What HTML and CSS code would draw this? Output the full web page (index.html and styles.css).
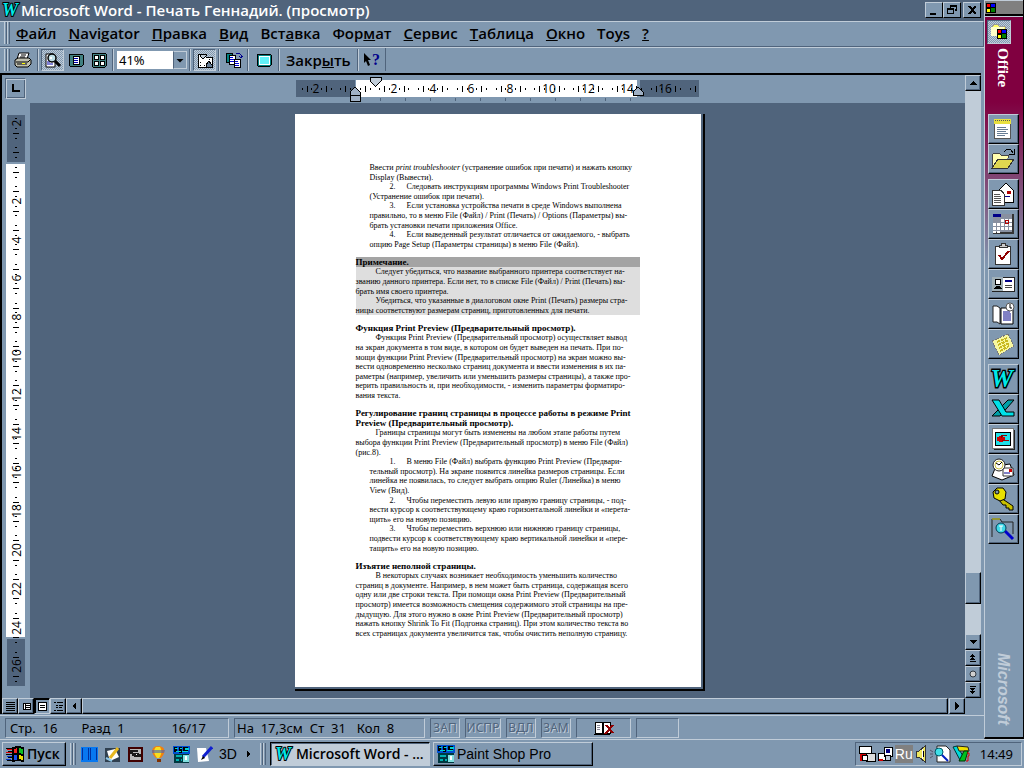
FILE: index.html
```html
<!DOCTYPE html>
<html lang="ru">
<head>
    <meta charset="UTF-8">
    <meta name="viewport" content="width=device-width, initial-scale=1.0">
    <title>Microsoft Word - Печать Геннадий. (просмотр)</title>

    <link rel="stylesheet" href="styles.css">
</head>
<body>
    <svg class="defs" aria-hidden="true">
        <symbol id="word-mark" viewBox="0 0 20 20">
            <text x="1" y="16" font-family="Liberation Serif, serif" font-size="18" font-weight="bold" font-style="italic" fill="#00e8e8" stroke="#000" stroke-width="2" paint-order="stroke">W</text>
        </symbol>
        <symbol id="flag" viewBox="0 0 10 10">
            <path d="M0 0h10v10H0z" fill="#000"/>
            <path d="M1 1h3v3H1z" fill="#f00"/><path d="M5 1h4v3H5z" fill="#00f"/>
            <path d="M1 6h3v3H1z" fill="#ff0"/><path d="M5 5h4v4H5z" fill="#008000"/>
        </symbol>
        <symbol id="psp" viewBox="0 0 18 18">
            <path d="M0 0h18v8H0z" fill="#0050d0"/><path d="M1 1h3v5H1zM6 1h3v6H6zM11 1h5v4h-5z" fill="#000"/>
            <path d="M2 2h3v1H2zM7 2h3v1H7zM13 2h4v2h-4zM3 5h5v1H3zM10 5h6v1h-6z" fill="#00d0d0"/>
            <path d="M1 8h16v10H1z" fill="#003840"/><path d="M3 10h6v2H3zM3 14h3v2H3zM8 14h2v2H8z" fill="#00b0b0"/>
            <path d="M11 10h6v7h-6z" fill="#80e0e0"/><path d="M13 11h2v4h-2z" fill="#fff"/>
        </symbol>
    </svg>

    <div class="desktop">
        <main class="window">
            <header class="title-bar">
                <svg width="20" height="20"><use href="#word-mark"/></svg>
                <h1>Microsoft Word - Печать Геннадий. (просмотр)</h1>
                <button class="win-btn" type="button" aria-label="Свернуть"><svg width="12" height="12"><path d="M2 9h6v2H2z"/></svg></button>
                <button class="win-btn" type="button" aria-label="Восстановить"><svg width="12" height="12"><path d="M4 1h7v6H9V5H8v5H1V4h3zM5 3v1h3v1h2V3zM2 6v3h5V6z" fill-rule="evenodd"/></svg></button>
                <button class="win-btn win-close" type="button" aria-label="Закрыть"><svg width="12" height="12"><path d="M2 2h2l2 2 2-2h2v1L7 6l3 3v1H8L6 8l-2 2H2V9l3-3-3-3z"/></svg></button>
            </header>

            <nav class="menu-bar">
                <span class="grip"></span>
                <a href="#"><u>Ф</u>айл</a>
                <a href="#"><u>N</u>avigator</a>
                <a href="#"><u>П</u>равка</a>
                <a href="#"><u>В</u>ид</a>
                <a href="#">Вст<u>а</u>вка</a>
                <a href="#">Фор<u>м</u>ат</a>
                <a href="#"><u>С</u>ервис</a>
                <a href="#"><u>Т</u>аблица</a>
                <a href="#"><u>О</u>кно</a>
                <a href="#">To<u>y</u>s</a>
                <a href="#"><u>?</u></a>
            </nav>

            <div class="toolbar">
                <span class="grip"></span>
                <button class="tool" type="button" aria-label="Печать">
                    <svg class="smooth" width="18" height="16"><path d="M5 1h10l-2 6H3z" fill="#fff" stroke="#000"/><path d="M7 3h5M6 5h5" stroke="#000"/><path d="M1 8l3-2h11l2 2v4l-3 3H3l-2-2z" fill="#c0c0b0" stroke="#000"/><path d="M2 10h12l2-2M3 12h10" stroke="#000" fill="none"/><path d="M8 11h3v1H8z" fill="#ff0"/></svg>
                </button>
                <span class="sep"></span>
                <button class="tool pressed" type="button" aria-label="Лупа">
                    <svg class="smooth" width="18" height="16"><path d="M2 2h7l2 3v10H2z" fill="#fff" stroke="#000"/><path d="M3 10h3M3 12h6" stroke="#00a"/><circle cx="8" cy="6" r="4" fill="#c0e0e8" stroke="#000" stroke-width="1.5"/><path d="M6 5h2v2H6z" fill="#fff"/><path d="M11 9l5 5" stroke="#000" stroke-width="3"/></svg>
                </button>
                <button class="tool" type="button" aria-label="Одна страница">
                    <svg width="16" height="16"><rect x="1" y="2" width="14" height="12" rx="1" fill="#408080" stroke="#000"/><path d="M5 4h6v8H5z" fill="#fff" stroke="#000"/><path d="M6 6h4M6 8h4M6 10h4" stroke="#00a"/></svg>
                </button>
                <button class="tool" type="button" aria-label="Несколько страниц">
                    <svg width="16" height="16"><rect x="1" y="1" width="14" height="14" rx="1" fill="#408080" stroke="#000"/><path d="M3 3h4v4H3zM9 3h4v4H9zM3 9h4v4H3zM9 9h4v4H9z" fill="#fff" stroke="#000"/></svg>
                </button>
                <span class="sep"></span>
                <label class="zoom-box">
                    <select aria-label="Масштаб"><option>41%</option><option>100%</option></select>
                    <span class="zoom-arrow"></span>
                </label>
                <span class="sep"></span>
                <button class="tool pressed" type="button" aria-label="Линейка">
                    <svg width="18" height="16"><path d="M2 2h5l3 3h6v10H2z" fill="#fff" stroke="#000"/><path d="M4 2h6v2L7 7 4 4z" fill="#c0ccd8" stroke="#000"/><path d="M10 15v-2l3-4 3 4v2z" fill="#667c94" stroke="#000"/><path d="M4 10h1M4 13h1M8 13h1M13 7h1" stroke="#000"/></svg>
                </button>
                <span class="sep"></span>
                <button class="tool" type="button" aria-label="Подгонка страниц">
                    <svg width="18" height="16"><path d="M1 1h6v9H1z" fill="#008080" stroke="#000"/><path d="M4 3h6v9H4z" fill="#fff" stroke="#000"/><path d="M5 5h3M5 7h4M5 9h4" stroke="#00c"/><path d="M9 7h6v8H9z" fill="#fff" stroke="#000"/><path d="M10 9h3M10 11h4M10 13h4" stroke="#00c"/><path d="M11 1h3l2 2v2M14 4l2 2 2-2" stroke="#00008b" fill="none"/></svg>
                </button>
                <span class="sep"></span>
                <button class="tool wide" type="button" aria-label="Во весь экран">
                    <svg width="16" height="14"><rect x="1" y="1" width="14" height="12" rx="1" fill="#008080" stroke="#000"/><path d="M3 3h10v8H3z" fill="#60f0f8" stroke="#fff"/></svg>
                </button>
                <span class="sep"></span>
                <button class="tool-text" type="button">Закр<u>ы</u>ть</button>
                <span class="sep"></span>
                <button class="tool" type="button" aria-label="Справка">
                    <svg class="smooth" width="18" height="20"><path d="M1 3l7 7H5l2 5-2 1-2-5-2 2z"/><text x="9" y="15" font-family="Liberation Serif, serif" font-size="16" font-weight="bold" fill="#00008b">?</text></svg>
                </button>
                <span class="toolbar-end"></span>
            </div>

            <section class="doc-frame">
                <div class="tab-corner"><button class="tab-btn" type="button" aria-label="Табуляция"><svg width="9" height="9"><path d="M1 0h2v6h6v2H1z"/></svg></button></div>

                <div class="ruler-row">
                    <svg id="ruler-h" class="ruler-h" width="403" height="28">
                        <path d="M0 5h59v17H0zM344 5h59v17h-59z" fill="#50647c"/>
                        <path d="M60 5h281v17H60z" fill="#fff"/>
                        <g class="ticks"></g>
                        <path d="M74 2h11v4l-5 5h-1l-5-5z" fill="#c0ccd8" stroke="#000"/>
                        <path d="M54 20v-3l5-5 5 5v3zM54 20h10v6H54z" fill="#a0b0c4" stroke="#000"/>
                        <path d="M337 20v-3l5-5 5 5v3z" fill="#a0b0c4" stroke="#000"/>
                    </svg>
                </div>

                <div class="ruler-col">
                    <svg id="ruler-v" width="20" height="571">
                        <path d="M1 0h18v47H1zM1 524h18v47H1z" fill="#50647c"/>
                        <path d="M0 49h19v473H0z" fill="#fff"/>
                        <g class="ticks"></g>
                    </svg>
                </div>

                <div class="canvas">
                    <div class="page-shadow">
                        <article class="page">
                            <div class="list">
                                <p>Ввести <i>print troubleshooter</i> (устранение ошибок при печати) и нажать кнопку<br>Display (Вывести).</p>
                                <p class="first"><span class="num">2.</span>Следовать инструкциям программы Windows Print Troubleshooter<br>(Устранение ошибок при печати).</p>
                                <p class="first"><span class="num">3.</span>Если установка устройства печати в среде Windows выполнена<br>правильно, то в меню File (Файл) / Print (Печать) / Options (Параметры) вы-<br>брать установки печати приложения Office.</p>
                                <p class="first"><span class="num">4.</span>Если выведенный результат отличается от ожидаемого, - выбрать<br>опцию Page Setup (Параметры страницы) в меню File (Файл).</p>
                            </div>

                            <aside class="note">
                                <h3>Примечание.</h3>
                                <p class="first">Следует убедиться, что название выбранного принтера соответствует на-<br>званию данного принтера. Если нет, то в списке File (Файл) / Print (Печать) вы-<br>брать имя своего принтера.</p>
                                <p class="first">Убедиться, что указанные в диалоговом окне Print (Печать) размеры стра-<br>ницы соответствуют размерам страниц, приготовленных для печати.</p>
                            </aside>

                            <h2>Функция Print Preview (Предварительный просмотр).</h2>
                            <p class="first">Функция Print Preview (Предварительный просмотр) осуществляет вывод<br>на экран документа в том виде, в котором он будет выведен на печать. При по-<br>мощи функции Print Preview (Предварительный просмотр) на экран можно вы-<br>вести одновременно несколько страниц документа и ввести изменения в их па-<br>раметры (например, увеличить или уменьшить размеры страницы), а также про-<br>верить правильность и, при необходимости, - изменить параметры форматиро-<br>вания текста.</p>

                            <h2>Регулирование границ страницы в процессе работы в режиме Print<br>Preview (Предварительный просмотр).</h2>
                            <p class="first">Границы страницы могут быть изменены на любом этапе работы путем<br>выбора функции Print Preview (Предварительный просмотр) в меню File (Файл)<br>(рис.8).</p>
                            <div class="list">
                                <p class="first"><span class="num">1.</span>В меню File (Файл) выбрать функцию Print Preview (Предвари-<br>тельный просмотр). На экране появится линейка размеров страницы. Если<br>линейка не появилась, то следует выбрать опцию Ruler (Линейка) в меню<br>View (Вид).</p>
                                <p class="first"><span class="num">2.</span>Чтобы переместить левую или правую границу страницы, - под-<br>вести курсор к соответствующему краю горизонтальной линейки и «перета-<br>щить» его на новую позицию.</p>
                                <p class="first"><span class="num">3.</span>Чтобы переместить верхнюю или нижнюю границу страницы,<br>подвести курсор к соответствующему краю вертикальной линейки и «пере-<br>тащить» его на новую позицию.</p>
                            </div>

                            <h2>Изъятие неполной страницы.</h2>
                            <p class="first">В некоторых случаях возникает необходимость уменьшить количество<br>страниц в документе. Например, в нем может быть страница, содержащая всего<br>одну или две строки текста. При помощи окна Print Preview (Предварительный<br>просмотр) имеется возможность смещения содержимого этой страницы на пре-<br>дыдущую. Для этого нужно в окне Print Preview (Предварительный просмотр)<br>нажать кнопку Shrink To Fit (Подгонка страниц). При этом количество текста во<br>всех страницах документа увеличится так, чтобы очистить неполную страницу.</p>
                        </article>
                    </div>
                </div>

                <div class="scroll-v">
                    <button class="scroll-btn" type="button" aria-label="Вверх"><svg width="8" height="8"><path d="M4 2l4 4H0z"/></svg></button>
                    <div class="track-v">
                        <span class="before"></span>
                        <span class="thumb"></span>
                        <span class="after"></span>
                    </div>
                    <button class="scroll-btn" type="button" aria-label="Вниз"><svg width="8" height="8"><path d="M0 2h8L4 6z"/></svg></button>
                    <button class="scroll-btn" type="button" aria-label="Предыдущая страница"><svg width="8" height="8"><path d="M3 0h1v1h1v1h1v1H4v1h1v1h1v1H1V5h1V4h1V3H1V2h1V1h1zM1 7h6v1H1z"/></svg></button>
                    <button class="scroll-btn" type="button" aria-label="Объект перехода"><svg class="smooth" width="8" height="8"><circle cx="4" cy="4" r="3" fill="#d0d0d0" stroke="#303840"/></svg></button>
                    <button class="scroll-btn" type="button" aria-label="Следующая страница"><svg width="8" height="8"><path d="M1 0h6v1H1zM1 2h5v1H5v1H4v1h2v1H5v1H4v1H3V7H2V6H1V5h2V4H2V3H1z"/></svg></button>
                </div>

                <div class="scroll-h">
                    <button class="scroll-btn" type="button" aria-label="Обычный"><svg width="9" height="9"><path d="M0 0h9v1H0zM0 2h9v1H0zM0 4h9v1H0zM0 6h9v1H0zM0 8h9v1H0z"/></svg></button>
                    <button class="scroll-btn" type="button" aria-label="Электронный документ"><svg width="9" height="9"><path d="M1 1h8v7H1z"/><path d="M2 2h1v5H2zM4 2h4v1H4zM4 4h4v1H4zM4 6h4v1H4z" fill="#fff"/></svg></button>
                    <button class="scroll-btn sunken" type="button" aria-label="Разметка"><svg width="9" height="9"><path d="M0 0h9v9H0z"/><path d="M1 1h7v7H1z" fill="#fff"/><path d="M2 3h5v1H2zM2 5h5v1H2z"/></svg></button>
                    <button class="scroll-btn" type="button" aria-label="Структура"><svg width="9" height="9"><path d="M0 0h2v1H0zM3 0h6v1H3zM2 3h2v1H2zM5 3h4v1H5zM2 5h2v1H2zM5 5h3v1H5zM0 8h2v1H0zM3 8h6v1H3z"/></svg></button>
                    <button class="scroll-btn" type="button" aria-label="Влево"><svg width="8" height="8"><path d="M6 0v8L2 4z"/></svg></button>
                    <span class="thumb"></span>
                    <button class="scroll-btn" type="button" aria-label="Вправо"><svg width="8" height="8"><path d="M2 0v8l4-4z"/></svg></button>
                </div>
            </section>

            <footer class="status-bar">
                <div class="field place"><span>Стр.&nbsp; 16</span><span>Разд&nbsp; 1</span><span class="pages">16/17</span></div>
                <div class="field pos"><span>На&nbsp; 17,3см</span><span>Ст&nbsp; 31</span><span>Кол&nbsp; 8</span></div>
                <div class="field off">ЗАП</div>
                <div class="field off rev">ИСПР</div>
                <div class="field off">ВДЛ</div>
                <div class="field off">ЗАМ</div>
                <div class="field book">
                    <svg width="20" height="15"><path d="M1 3l1-2h5l2 1 2-1h5v11H1z" fill="#fff" stroke="#000"/><path d="M0 13h16v1H0zM8 2h2v11H8z"/><path d="M3 4h3M3 6h3M3 8h3" stroke="#889"/><path d="M12 4l7 8M19 4l-8 9" stroke="#900000" stroke-width="2"/></svg>
                </div>
                <div class="field blank"></div>
            </footer>
        </main>

        <aside class="office-bar">
            <div class="office-cap"><svg width="10" height="10"><use href="#flag"/></svg></div>
            <div class="office-body">
                <button class="office-main" type="button" aria-label="Office"><svg width="18" height="18"><path d="M2 4l2-3h4l1 2h6v9H2z" fill="#ff6" stroke="#999"/><path d="M1 4h13v9H1z" fill="#ffffc8"/><svg x="7" y="6" width="10" height="10"><use href="#flag"/></svg></svg></button>
                <span class="office-name">Office</span>

                <div class="office-group">
                    <button class="shortcut" type="button" aria-label="Создать документ"><svg width="24" height="24"><path d="M5 5h15v17H5z" fill="#000"/><path d="M3 3h16v18H3z" fill="#fff" stroke="#555"/><path d="M3 2h17v5H3z" fill="#e8e040"/><path d="M4 3h15" stroke="#555" stroke-dasharray="1 1"/><path d="M6 10h9M6 12h11M6 14h9M6 16h11M6 18h8" stroke="#667c94"/></svg></button>
                    <button class="shortcut" type="button" aria-label="Открыть документ"><svg width="24" height="24"><path d="M1 21V8l2-2h5l2 2h7v3" fill="#ffffb0" stroke="#444"/><path d="M1 21l6-9h16l-6 9z" fill="#e0d850" stroke="#333"/><path d="M13 5c3-4 7-4 9 1M23 2v5h-5" fill="none" stroke="#000"/></svg></button>
                </div>
                <div class="office-group">
                    <button class="shortcut" type="button" aria-label="Сообщение"><svg width="24" height="24"><path d="M7 9l8-8 7 7v12H7z" fill="#fff" stroke="#000"/><path d="M16 9h4v3h-4z" fill="#b00000"/><path d="M11 14h8" stroke="#008"/><path d="M1 8h9l3 4v11H1z" fill="#fff" stroke="#333"/><path d="M3 12h6M3 14h7M3 16h7M3 18h7M3 20h7" stroke="#555"/></svg></button>
                    <button class="shortcut" type="button" aria-label="Встреча"><svg width="24" height="24"><path d="M2 2h21v20H2z" fill="#333"/><path d="M2 2h19v18H2z" fill="#8890a0"/><path d="M2 2h8v3H2z" fill="#008"/><path d="M10 7h3v3h-3zM14 7h3v3h-3zM18 7h3v3h-3zM2 11h3v3H2zM6 11h3v3H6zM10 11h3v3h-3zM14 11h3v3h-3zM18 11h3v3h-3zM2 15h3v3H2zM6 15h3v3H6zM10 15h3v3h-3zM14 15h3v3h-3zM18 15h3v3h-3zM2 19h3v2H2zM6 19h3v2H6z" fill="#fff"/><circle cx="16" cy="10" r="2" fill="none" stroke="#b00000"/></svg></button>
                    <button class="shortcut" type="button" aria-label="Задача"><svg width="24" height="24"><path d="M5 5h15v18H5z" fill="#000"/><path d="M4 4h15v18H4z" fill="#fff" stroke="#333"/><path d="M8 5V3h2V1h4v2h2v2z" fill="#ccc" stroke="#333"/><path d="M8 13l3 4 7-8" fill="none" stroke="#900000" stroke-width="2"/></svg></button>
                    <button class="shortcut" type="button" aria-label="Контакт"><svg width="24" height="24"><path d="M1 5h22v14H1z" fill="#fff" stroke="#222"/><path d="M1 5h11v14H1z" fill="#a0b0b8"/><circle cx="7" cy="10" r="3" fill="#fff" stroke="#000"/><path d="M3 17c0-4 8-4 8 0z" fill="#000"/><path d="M14 9h7" stroke="#008" stroke-width="2"/><path d="M14 13h7M14 15h7" stroke="#444"/></svg></button>
                    <button class="shortcut" type="button" aria-label="Дневник"><svg class="smooth" width="24" height="24"><path d="M2 4h4l3 2v16l-3-2H2z" fill="#fff" stroke="#222"/><path d="M10 6h12v16H10z" fill="#fff" stroke="#000"/><path d="M12 10h7M12 12h8M12 14h8M12 16h8M12 18h8" stroke="#008"/><circle cx="19" cy="5" r="4" fill="#fff" stroke="#555"/><path d="M19 2v4h2" fill="none" stroke="#000"/></svg></button>
                    <button class="shortcut" type="button" aria-label="Заметка"><svg width="24" height="24"><path d="M1 9l16-7 6 12-15 9z" fill="#f8f8a0" stroke="#777" stroke-dasharray="2 1"/><path d="M6 10l10-4M7 13l11-5M8 16l11-5M9 19l9-5" stroke="#c8b820" stroke-width="2" stroke-dasharray="3 1"/></svg></button>
                </div>
                <div class="office-group">
                    <button class="shortcut" type="button" aria-label="Word"><svg width="28" height="28"><use href="#word-mark"/></svg></button>
                    <button class="shortcut" type="button" aria-label="Excel"><svg class="smooth" width="24" height="22"><path d="M17 2h6L9 18H1z" fill="#00a0a8" stroke="#000"/><path d="M1 2h7l7 12h8v4H11z" fill="#00e0e8" stroke="#000"/></svg></button>
                    <button class="shortcut" type="button" aria-label="PowerPoint"><svg width="24" height="24"><path d="M3 3h21v20H3z" fill="#222"/><path d="M1 1h21v20H1z" fill="#fff" stroke="#777"/><path d="M4 5h15v13H4z" fill="#20e0e8" stroke="#000"/><ellipse cx="10" cy="12" rx="4" ry="3" fill="#d00000"/><path d="M10 12V8h6v1h-4z" fill="#900000"/><path d="M11 13h7" stroke="#900"/></svg></button>
                    <button class="shortcut" type="button" aria-label="Outlook"><svg class="smooth" width="24" height="24"><path d="M5 9l14-2 4 11-12 5-10-4z" fill="#fff" stroke="#000"/><path d="M12 11h10v8H12z" fill="#fff" stroke="#333"/><path d="M18 12h3v3h-3z" fill="#c00"/><path d="M13 16h6" stroke="#008"/><circle cx="8" cy="8" r="6" fill="#fff" stroke="#222"/><circle cx="8" cy="8" r="4" fill="none" stroke="#c8c040"/><path d="M8 8l3-3M8 8L5 6" stroke="#000"/></svg></button>
                    <button class="shortcut" type="button" aria-label="Access"><svg class="smooth" width="24" height="24"><path d="M10 11l12 8v4h-4v-2h-3v-3h-3l-4-5z" fill="#c8c000" stroke="#000"/><path d="M2 5l4-4h6l3 4-1 7-5 2-6-3z" fill="#e8e000" stroke="#000"/><circle cx="6" cy="5" r="2" fill="#8098b0" stroke="#000"/></svg></button>
                    <button class="shortcut" type="button" aria-label="Поиск"><svg class="smooth" width="24" height="24"><path d="M1 20V2h8l2 3h11v12" fill="none" stroke="#222"/><path d="M1 2h8" stroke="#d8d000"/><path d="M14 14l8 8" stroke="#00c" stroke-width="3"/><circle cx="10" cy="11" r="5" fill="#40d8e8" stroke="#003850"/><path d="M8 9h4M10 9v5" stroke="#fff"/></svg></button>
                </div>
                <span class="office-brand">Microsoft</span>
            </div>
        </aside>
    </div>

    <footer class="taskbar">
        <button class="start" type="button"><svg width="19" height="18"><path d="M0 3h6v1H0zM2 6h4v1H2zM0 9h6v1H0zM2 12h4v1H2zM1 15h5v1H1z" fill="#000"/><path d="M1 4h5v1H1zM0 7h6v1H0z" fill="#d00"/><path d="M1 11h5v1H1zM0 14h5v1H0z" fill="#03c"/><path d="M6 2l5-1 7 1v15l-6-1-6 1z" fill="#000"/><path d="M8 4l3-1v5H8z" fill="#f02020"/><path d="M13 3l4 1v5l-4-1z" fill="#10c020"/><path d="M8 10h3v5H8z" fill="#1850f0"/><path d="M13 10l4 1v4l-4-1z" fill="#f0e000"/></svg>Пуск</button>
        <span class="divider"></span>
        <nav class="quick">
            <button type="button" aria-label="Commander"><svg width="17" height="17"><path d="M0 1h17v15H0z" fill="#0878f0"/><path d="M1 2v12M7 2v12M9 2v12M15 2v12" stroke="#0030a0"/></svg></button>
            <button type="button" aria-label="Свернуть все"><svg class="smooth" width="17" height="17"><path d="M1 2h15v14H1z" fill="#304050"/><path d="M3 5l8-2 4 8-9 4z" fill="#fff"/><path d="M6 12L14 2" stroke="#e8b820" stroke-width="3"/><path d="M2 12l6 3" stroke="#90c8e8" stroke-width="2"/></svg></button>
            <button type="button" aria-label="Просмотр"><svg width="17" height="17"><path d="M1 1h15v15H1z" fill="#400000"/><path d="M3 3h11v11H3z" fill="#b8b8b8"/><path d="M3 4h8v2H6v2H3zM5 7h7v1h2v3H7v-1H5z" fill="#181818"/><path d="M9 8h1v1H9z" fill="#fff"/></svg></button>
            <button type="button" aria-label="Шар"><svg class="smooth" width="17" height="17"><path d="M8 0c8 0 8 7 3 12H6C0 7 1 0 8 0z" fill="#f08010"/><path d="M6 1c-3 3-2 7 1 11h2c3-4 3-8 1-11z" fill="#f8e020"/><path d="M2 4h13l-1 3H2z" fill="#4060c0" opacity=".6"/><path d="M7 13h4v3H7z" fill="#803000"/></svg></button>
            <button type="button" aria-label="Paint Shop Pro"><svg width="17" height="17"><use href="#psp"/></svg></button>
            <button type="button" aria-label="Перо"><svg class="smooth" width="17" height="17"><path d="M1 2l9 0 3 13-11 1z" fill="#fff"/><path d="M7 11L16 1" stroke="#1020d0" stroke-width="3"/><path d="M5 14l2-4 2 2z"/></svg></button>
            <button class="text-3d" type="button">3D</button>
            <button class="more" type="button" aria-label="Ещё"><svg width="5" height="7"><path d="M1 0v6l3-3z"/></svg></button>
        </nav>
        <span class="divider"></span>
        <button class="task active" type="button"><svg width="20" height="20"><use href="#word-mark"/></svg>Microsoft Word - ...</button>
        <button class="task" type="button"><svg width="18" height="18"><use href="#psp"/></svg>Paint Shop Pro</button>
        <div class="tray">
            <svg width="36" height="18"><path d="M1 1h12v7H1z" fill="#fff" stroke="#000"/><path d="M2 9h8v7H2z" fill="#d00000"/><path d="M8 8h9v8H8z" fill="#ddd" stroke="#000"/><circle cx="7" cy="13" r="3" fill="#fff" stroke="#000"/><path d="M20 8h8v7h-8z" fill="#fff" stroke="#000"/><path d="M26 2h8v9h-8z" fill="#fff" stroke="#000"/><path d="M28 4h4v4h-4z" fill="#000080"/><circle cx="30" cy="13" r="3" fill="#c0ccd8" stroke="#000"/><path d="M21 14h4v2h-4z" fill="#d00000"/></svg>
            <span class="lang">Ru</span>
            <svg width="15" height="18"><path d="M2 6h3l6-5v16l-6-5H2z" fill="#f0e860" stroke="#333"/><path d="M8 4v10" stroke="#fff"/><path d="M9 6v6" stroke="#000"/></svg>
            <svg class="smooth" width="21" height="18"><path d="M7 1h9l4 4v12H7z" fill="#fff" stroke="#222"/><path d="M0 5l3 2M0 9h3M0 13l3-2" stroke="#556"/><circle cx="9" cy="7" r="4" fill="#40e0e8" stroke="#056"/><path d="M12 10l6 6" stroke="#0020c0" stroke-width="2"/></svg>
            <svg class="smooth" width="18" height="18"><path d="M1 2l4-1 6 10-3 4z" fill="#00d8d8" stroke="#033"/><path d="M5 1l11 1 1 4H7z" fill="#f0e000" stroke="#222"/><path d="M16 6l-3 10H7l5-10z" fill="#00c020" stroke="#030"/><path d="M15 8h2v3h-1v5h-2" stroke="#e00000" fill="none"/></svg>
            <time>14:49</time>
        </div>
    </footer>

    <script>
        const STEP = 19.4; // one centimetre at the 41% zoom

        // half-centimetre ticks, quarter dots, a number on every second mark
        function draw_ruler(id, zero, from, to, vertical)
        {
            let out = "";

            for(let q = from * 4; q <= to * 4; q++)
            {
                const pos = Math.round(zero + q * STEP / 4);

                if(q % 4 === 0)
                {
                    if(q % 8 !== 0 || q === 0) continue;
                    const at = vertical ? `transform="translate(15 ${pos}) rotate(-90)"` : `x="${pos}" y="18"`;
                    out += `<text class="ruler-num" ${at}>${Math.abs(q / 4)}</text>`;
                    continue;
                }

                // wide numbers cover the quarter dots next to them
                const half = q % 2 === 0;
                if(!half && Math.abs(Math.round(q / 8) * 8) >= 80 && Math.abs(q - Math.round(q / 8) * 8) === 1) continue;

                const len = half ? 6 : 2;
                out += vertical
                    ? `<rect x="${10 - len / 2}" y="${pos}" width="${len}" height="1"/>`
                    : `<rect x="${pos}" y="${14 - len / 2}" width="1" height="${len}"/>`;
            }

            // default tab stops under the horizontal ruler
            if(!vertical)
            {
                for(let x = 84; x < 340; x += 25) out += `<rect class="tab-stop" x="${x}" y="23" width="1" height="3"/>`;
            }

            document.querySelector(`#${id} .ticks`).innerHTML = out;
        }

        draw_ruler("ruler-h", 59, -2.75, 17.5, false);
        draw_ruler("ruler-v", 47, -2.25, 26.75, true);
    </script>
</body>
</html>
```

FILE: styles.css
```css
:root{
    --face: #8098b0;
    --dark: #50647c;
    --light: #c0ccd8;
}

*{
    box-sizing: border-box;
}

body{
    margin: 0;
    height: 100vh;
    display: flex;
    flex-direction: column;
    overflow: hidden;
    background-color: var(--face);
    color: black;
    font-family: "Noto Sans", sans-serif;
    font-size: 13px;
}

svg{
    display: block;
    flex: none;
    shape-rendering: crispEdges;
}

.smooth{
    shape-rendering: auto;
}

button, select{
    font: inherit;
    color: inherit;
    border: 0;
    padding: 0;
    background: none;
}

.defs{
    position: absolute;
    width: 0;
    height: 0;
}

.desktop{
    flex: 1;
    min-height: 0;
    display: flex;
}

.window{
    flex: 1;
    min-width: 0;
    display: flex;
    flex-direction: column;
}

/* title */
.title-bar{
    height: 21px;
    padding: 0 3px 1px 1px;
    display: flex;
    align-items: center;
    background-color: var(--dark);
    color: white;
}

.title-bar h1{
    flex: 1;
    margin: 0;
    font: 600 15px/18px "Open Sans", sans-serif;
    white-space: nowrap;
}

.win-btn{
    width: 18px;
    height: 16px;
    padding: 1px 2px;
    background-color: var(--face);
    border: 1px solid;
    border-color: var(--light) black black var(--light);
}

.win-close{
    margin-left: 2px;
}

/* menu and toolbar */
.menu-bar, .toolbar{
    display: flex;
    align-items: center;
    border-top: 1px solid var(--light);
    padding: 0 0 2px 4px;
}

.menu-bar{
    height: 26px;
    gap: 12px;
    border-bottom: 1px solid var(--dark);
    border-right: 1px solid var(--dark);
    font: 600 15px/20px "Open Sans", sans-serif;
}

.menu-bar a{
    color: black;
    text-decoration: none;
}

.grip, .divider{
    width: 6px;
    height: 22px;
    flex: none;
    background: repeating-linear-gradient(to right, var(--light) 0 1px, var(--face) 1px 2px, var(--dark) 2px 3px);
}

.menu-bar .grip{
    margin-right: -6px;
}

.toolbar{
    height: 26px;
}

.tool{
    width: 23px;
    height: 22px;
    display: flex;
    align-items: center;
    justify-content: center;
}

.grip + .tool{
    margin: 0 1px;
}

.wide{
    width: 25px;
}

.pressed, .office-main{
    border: 1px solid;
    border-color: var(--dark) var(--light) var(--light) var(--dark);
    background: repeating-conic-gradient(var(--light) 0 25%, var(--face) 0 50%) 0 0 / 2px 2px;
}

.sep{
    width: 2px;
    height: 22px;
    margin: 0 2px;
    background-color: var(--dark);
    border-right: 1px solid var(--light);
}

.tool-text{
    padding: 0 4px;
    font: 600 15px/20px "Open Sans", sans-serif;
}

.toolbar-end{
    align-self: stretch;
    border-right: 1px solid var(--dark);
    width: 2px;
}

.zoom-box{
    position: relative;
    width: 70px;
    height: 18px;
    margin-left: 1px;
    display: flex;
    background-color: white;
}

.zoom-box select{
    appearance: none;
    width: 100%;
    padding-left: 2px;
    line-height: 18px;
}

.zoom-arrow{
    position: absolute;
    top: 0;
    right: 0;
    width: 14px;
    height: 18px;
    pointer-events: none;
    background-color: var(--face);
    border: 1px solid var(--light);
    border-left-color: var(--dark);
}

.zoom-arrow::after{
    content: "";
    display: block;
    margin: 7px auto 0;
    width: 8px;
    height: 4px;
    background-color: black;
    clip-path: polygon(0 0, 100% 0, 50% 100%);
}

/* document */
.doc-frame{
    flex: 1;
    min-height: 0;
    display: grid;
    grid-template: 28px minmax(0, 1fr) 16px / 28px minmax(0, 1fr) 16px;
    margin-right: 3px;
    border-top: 2px solid black;
    border-left: 2px solid black;
}

.tab-corner{
    padding: 3px;
}

.tab-btn{
    width: 21px;
    height: 21px;
    padding: 5px;
    border: 1px solid;
    border-color: var(--dark) var(--light) var(--light) var(--dark);
    box-shadow: inset 1px 1px var(--light), inset -1px -1px var(--dark);
}

.ruler-row{
    display: flex;
    justify-content: center;
}

.ruler-num{
    font-family: "Open Sans", sans-serif;
    font-size: 12px;
    text-anchor: middle;
}

.tab-stop{
    fill: var(--dark);
}

.ruler-col{
    padding: 12px 4px;
}

.canvas{
    display: flex;
    justify-content: center;
    padding: 11px 0 7px 4px;
    background-color: var(--dark);
    overflow: hidden;
}

.page-shadow{
    padding: 0 2px 2px 0;
    border-right: 2px solid black;
    border-bottom: 2px solid black;
}

.page{
    width: 406px;
    height: 100%;
    padding: 49px 61px 0;
    background-color: white;
    font: 8px/1.2 "Liberation Serif", serif;
    white-space: nowrap;
}

.page p, .page h2, .page h3{
    margin: 0;
}

.page h2{
    margin-top: 8px;
    font-size: 9px;
    line-height: 10px;
}

.page h3{
    font-size: 9px;
    line-height: 10px;
    background-color: #a4a4a4;
}

.first{
    text-indent: 20px;
}

.list{
    margin-left: 14px;
}

.num{
    display: inline-block;
    width: 17px;
    text-indent: 0;
}

.note{
    margin-top: 8px;
    background-color: #dedede;
}

/* scroll bars */
.scroll-v{
    grid-area: 1 / 3 / 3 / 4;
    display: flex;
    flex-direction: column;
}

.scroll-h{
    grid-area: 3 / 1 / 4 / 3;
    display: flex;
}

.scroll-btn, .thumb{
    width: 16px;
    height: 16px;
    flex: none;
    display: flex;
    align-items: center;
    justify-content: center;
    background-color: var(--face);
    border: 1px solid;
    border-color: var(--light) black black var(--light);
    box-shadow: inset -1px -1px var(--dark);
}

.sunken{
    border-color: black var(--light) var(--light) black;
    box-shadow: inset 1px 1px black;
}

.track-v{
    flex: 1;
    display: flex;
    flex-direction: column;
    background-color: var(--light);
}

.track-v .before{
    flex: 480;
}

.track-v .after{
    flex: 30;
}

.track-v .thumb{
    height: 32px;
}

.scroll-h .thumb{
    flex: 1;
    margin-right: 1px;
}

/* status bar */
.status-bar{
    height: 24px;
    margin-top: 1px;
    padding: 2px 5px 1px;
    display: flex;
    gap: 5px;
    border-top: 1px solid var(--light);
}

.field{
    display: flex;
    align-items: center;
    border: 1px solid;
    border-color: var(--dark) var(--light) var(--light) var(--dark);
    line-height: 18px;
    white-space: nowrap;
}

.place{
    width: 224px;
    padding: 0 22px 0 4px;
    gap: 24px;
}

.pages{
    margin-left: auto;
}

.pos{
    width: 191px;
    padding-left: 2px;
    gap: 7px;
}

.pos span:last-child{
    margin-left: 4px;
}

.off{
    width: 30px;
    justify-content: center;
    color: var(--dark);
    font-size: 12px;
    text-shadow: 1px 1px var(--light);
}

.rev{
    width: 36px;
}

.book{
    width: 55px;
    justify-content: center;
}

.blank{
    width: 43px;
}

/* office panel */
.office-bar{
    width: 40px;
    display: flex;
    flex-direction: column;
    border-left: 1px solid var(--light);
    border-right: 1px solid black;
    border-bottom: 2px solid black;
}

.office-cap{
    height: 16px;
    padding: 3px 1px;
    background-color: #808080;
    border-top: 1px solid var(--light);
    border-bottom: 2px solid black;
}

.office-cap svg{
    margin-top: -1px;
}

.office-body{
    flex: 1;
    display: flex;
    flex-direction: column;
    align-items: center;
    padding: 3px 2px 0 0;
    border-top: 1px solid var(--light);
    background: linear-gradient(#800040 85px, var(--face) 250px);
}

.office-main{
    align-self: flex-start;
    margin-left: 2px;
    width: 24px;
    height: 24px;
    padding: 2px;
}

.office-name, .office-brand{
    writing-mode: vertical-rl;
    line-height: 16px;
}

.office-name{
    height: 70px;
    padding-top: 4px;
    color: white;
    font-family: "Liberation Serif", serif;
    font-weight: bold;
    font-size: 15px;
}

.office-group{
    margin-bottom: 5px;
}

.shortcut{
    width: 31px;
    height: 30px;
    display: flex;
    align-items: center;
    justify-content: center;
    background-color: var(--face);
    border: 1px solid;
    border-color: var(--light) black black var(--light);
    box-shadow: inset -1px -1px var(--dark);
}

.office-brand{
    margin: auto 0 12px;
    color: var(--light);
    font-family: "Liberation Sans", sans-serif;
    font-size: 16px;
    font-weight: bold;
    font-style: italic;
}

/* task bar */
.taskbar{
    height: 29px;
    padding: 2px;
    display: flex;
    align-items: center;
    border-top: 1px solid var(--light);
    font-family: "Liberation Sans", sans-serif;
    font-size: 14px;
}

.start, .task{
    height: 24px;
    display: flex;
    align-items: center;
    gap: 2px;
    padding: 0 3px;
    border: 1px solid;
    border-color: var(--light) black black var(--light);
    box-shadow: inset -1px -1px var(--dark);
    white-space: nowrap;
}

.start{
    width: 64px;
    font: 600 14px/20px "Open Sans", sans-serif;
}

.divider{
    margin: 0 4px;
}

.quick{
    display: flex;
    align-items: center;
    gap: 6px;
    margin: 0 5px 0 1px;
}

.more{
    margin: 0 0 0 3px;
}

.task{
    width: 160px;
    margin-right: 3px;
}

.active{
    background-color: var(--light);
    border-color: black var(--light) var(--light) black;
    box-shadow: inset 1px 1px var(--dark);
    font: 600 14px/20px "Open Sans", sans-serif;
}

.tray{
    margin-left: auto;
    height: 24px;
    display: flex;
    align-items: center;
    gap: 1px;
    padding: 0 8px 0 2px;
    border: 1px solid;
    border-color: var(--dark) var(--light) var(--light) var(--dark);
}

.lang{
    width: 18px;
    line-height: 18px;
    text-align: center;
    background-color: #808080;
    color: white;
}

.tray time{
    margin-left: 9px;
    font-family: "Noto Sans", sans-serif;
    font-size: 13px;
}
```
